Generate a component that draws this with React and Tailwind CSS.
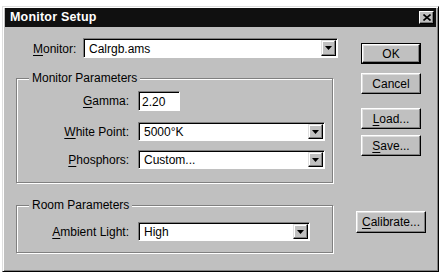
import React from "react";

const U = ({ children }) => <span className="underline underline-offset-[2px]">{children}</span>;

function Sunken({ className = "", children }) {
  return (
    <div
      className={
        "flex shrink-0 items-center bg-white border border-t-[#808080] border-l-[#808080] border-r-white border-b-white shadow-[inset_1px_1px_0_#000] " +
        className
      }
    >
      {children}
    </div>
  );
}

function Arrow() {
  return (
    <div className="flex h-full w-[15px] items-center justify-center bg-[#c0c0c0] border border-t-[#dfdfdf] border-l-[#dfdfdf] border-r-black border-b-black shadow-[inset_-1px_-1px_0_#808080,inset_1px_1px_0_#fff]">
      <svg width="7" height="4" viewBox="0 0 7 4">
        <path d="M0 0H7L3.5 4Z" fill="#000" />
      </svg>
    </div>
  );
}

function Combo({ value, className }) {
  return (
    <Sunken className={"justify-between pr-[1px] py-[1px] " + className}>
      <span className="pl-[5px] pt-[1px]">{value}</span>
      <Arrow />
    </Sunken>
  );
}

const raised =
  "flex items-center justify-center bg-[#c0c0c0] border border-t-white border-l-white border-r-black border-b-black shadow-[inset_-1px_-1px_0_#808080,inset_1px_1px_0_#dfdfdf]";

function Btn({ children, className = "" }) {
  return <div className={"shrink-0 " + raised + " " + className}>{children}</div>;
}

function Group({ title, className = "", children }) {
  return (
    <div
      className={
        "relative border border-[#808080] shadow-[1px_1px_0_#fff,inset_1px_1px_0_#fff] " + className
      }
    >
      <div className="absolute -top-[8px] left-[12px] bg-[#c0c0c0] px-[3px] leading-[14px]">{title}</div>
      {children}
    </div>
  );
}

function Row({ label, children, className = "" }) {
  return (
    <div className={"flex items-center " + className}>
      <div className="w-[113px] shrink-0 pr-[1px] text-right">{label}</div>
      <div className="ml-[8px]">{children}</div>
    </div>
  );
}

export default function App() {
  return (
    <div className="h-[273px] w-[442px] bg-white pl-[2px] pt-[6px] font-['Liberation_Sans',Arial,sans-serif] text-[12px] text-black">
      <div className="flex h-[266px] w-[437px] flex-col bg-[#c0c0c0] border border-t-[#dfdfdf] border-l-[#dfdfdf] border-r-black border-b-black shadow-[inset_1px_1px_0_#fff,inset_-1px_-1px_0_#808080]">
        <div className="mx-[2px] mt-[1px] flex h-[19px] shrink-0 items-center justify-between bg-[#101010] pl-[5px] pr-[2px]">
          <span className="text-[12.5px] font-bold tracking-[0.2px] text-white">Monitor Setup</span>
          <div className="flex h-[13px] w-[15px] items-center justify-center bg-[#c0c0c0] border border-t-white border-l-white border-r-black border-b-black shadow-[inset_-1px_-1px_0_#808080]">
            <svg width="8" height="7" viewBox="0 0 8 7">
              <path d="M0.5 0.5L7.5 6.5M7.5 0.5L0.5 6.5" stroke="#000" strokeWidth="1.6" />
            </svg>
          </div>
        </div>

        <div className="flex items-start pl-[13px]">
          <div className="w-[317px] shrink-0">
            <div className="mt-[11px] flex h-[20px] items-center">
              <div className="w-[67px] shrink-0 pl-[17px] pt-[1px]">
                <U>M</U>onitor:
              </div>
              <Combo value="Calrgb.ams" className="h-[20px] w-[255px]" />
            </div>

            <Group title="Monitor Parameters" className="mt-[20px] h-[105px]">
              <Row label={<><U>G</U>amma:</>} className="mt-[12px]">
                <Sunken className="h-[20px] w-[42px]">
                  <span className="pl-[3px] pt-[1px]">2.20</span>
                </Sunken>
              </Row>
              <Row label={<><U>W</U>hite Point:</>} className="mt-[11px]">
                <Combo value="5000°K" className="h-[19px] w-[187px]" />
              </Row>
              <Row label={<><U>P</U>hosphors:</>} className="mt-[9px]">
                <Combo value="Custom..." className="h-[19px] w-[187px]" />
              </Row>
            </Group>

            <Group title="Room Parameters" className="mt-[22px] h-[48px]">
              <Row label={<><U>A</U>mbient Light:</>} className="mt-[16px]">
                <Combo value="High" className="h-[19px] w-[172px]" />
              </Row>
            </Group>
          </div>

          <div className="ml-[23px] flex w-[70px] shrink-0 flex-col items-center">
            <div className="mt-[16px] h-[21px] w-[60px] shrink-0 border border-black">
              <div className={raised + " h-[19px] w-[58px]"}>OK</div>
            </div>
            <Btn className="mt-[9px] h-[21px] w-[60px]">Cancel</Btn>
            <Btn className="mt-[14px] h-[21px] w-[60px]">
              <span><U>L</U>oad...</span>
            </Btn>
            <Btn className="mt-[6px] h-[21px] w-[60px]">
              <span><U>S</U>ave...</span>
            </Btn>
            <Btn className="mt-[55px] h-[22px] w-[70px]">
              <span><U>C</U>alibrate...</span>
            </Btn>
          </div>
        </div>
      </div>
    </div>
  );
}
